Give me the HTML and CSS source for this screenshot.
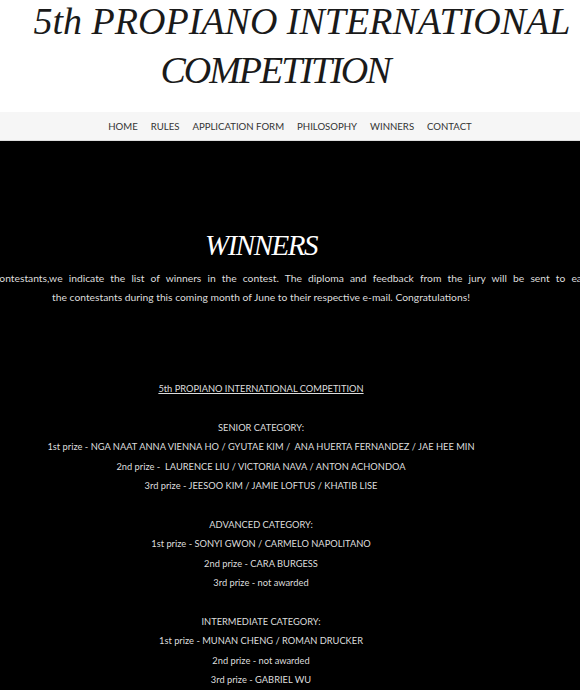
FILE: index.html
```html
<!DOCTYPE html>
<html>
<head>
<meta charset="utf-8">
<link rel="stylesheet" href="styles.css">
</head>
<body>
<header class="masthead">
  <h1 class="site-title"><span class="title-line">5th PROPIANO INTERNATIONAL</span><span class="title-line tight">COMPETITION</span></h1>
</header>
<nav class="menu">
  <a href="#">HOME</a>
  <a href="#">RULES</a>
  <a href="#">APPLICATION FORM</a>
  <a href="#">PHILOSOPHY</a>
  <a href="#">WINNERS</a>
  <a href="#">CONTACT</a>
</nav>
<main class="stage">
  <div class="column">
    <h2 class="page-title">WINNERS</h2>
    <p class="intro"><span class="intro-line wide">Dear all of our contestants,we indicate the list of winners in the contest. The diploma and feedback from the jury will be sent to each of</span><span class="intro-line">the contestants during this coming month of June to their respective e-mail. Congratulations!</span></p>
    <div class="results">
      <p class="comp"><u>5th PROPIANO INTERNATIONAL COMPETITION</u></p>
      <p class="gap">&nbsp;</p>
      <p>SENIOR CATEGORY:</p>
      <p>1st prize - NGA NAAT ANNA VIENNA HO / GYUTAE KIM / &nbsp;ANA HUERTA FERNANDEZ / JAE HEE MIN</p>
      <p>2nd prize - &nbsp;LAURENCE LIU / VICTORIA NAVA / ANTON ACHONDOA</p>
      <p>3rd prize - JEESOO KIM / JAMIE LOFTUS / KHATIB LISE</p>
      <p class="gap">&nbsp;</p>
      <p>ADVANCED CATEGORY:</p>
      <p>1st prize - SONYI GWON / CARMELO NAPOLITANO</p>
      <p>2nd prize - CARA BURGESS</p>
      <p>3rd prize - not awarded</p>
      <p class="gap">&nbsp;</p>
      <p>INTERMEDIATE CATEGORY:</p>
      <p>1st prize - MUNAN CHENG / ROMAN DRUCKER</p>
      <p>2nd prize - not awarded</p>
      <p>3rd prize - GABRIEL WU</p>
    </div>
  </div>
</main>
</body>
</html>
```
FILE: styles.css
```css
html, body {
  margin: 0;
  padding: 0;
  background: #000;
  overflow-x: hidden;
}
.masthead {
  background: #fff;
  height: 112px;
  box-sizing: border-box;
  overflow: hidden;
}
.site-title {
  margin: -3px 0 0;
  padding-left: 24px;
  font-family: "Liberation Serif", serif;
  font-style: italic;
  font-weight: normal;
  font-size: 38px;
  line-height: 49px;
  text-align: center;
  color: #1a1a1a;
}
.title-line {
  display: block;
}
.tight {
  letter-spacing: -2px;
  padding-right: 54px;
}
.menu {
  background: #f6f6f6;
  height: 28px;
  border-bottom: 1px solid #ddd;
  display: flex;
  justify-content: center;
  align-items: center;
  gap: 13px;
  font-family: "Lato", sans-serif;
  font-size: 9.6px;
}
.menu a {
  color: #333;
  text-decoration: none;
}
.stage {
  background: #000;
  overflow: hidden;
  padding-top: 88px;
  height: 549px;
  box-sizing: border-box;
}
.column {
  width: 800px;
  margin-left: -139px;
  text-align: center;
}
.page-title {
  margin: 0;
  font-family: "Liberation Serif", serif;
  font-style: italic;
  font-weight: normal;
  font-size: 29px;
  letter-spacing: -1.5px;
  line-height: 32px;
  color: #fff;
}
.intro {
  margin: 8px 0 0;
  font-family: "Lato", sans-serif;
  font-size: 10.3px;
  line-height: 19px;
  color: #ddd;
  white-space: nowrap;
}
.intro-line {
  display: block;
}
.wide {
  word-spacing: 3.5px;
}
.results {
  margin-top: 72px;
  font-family: "Lato", sans-serif;
  font-size: 9.3px;
  color: #ddd;
}
.results p {
  margin: 0;
  line-height: 19.4px;
  white-space: nowrap;
}
```
